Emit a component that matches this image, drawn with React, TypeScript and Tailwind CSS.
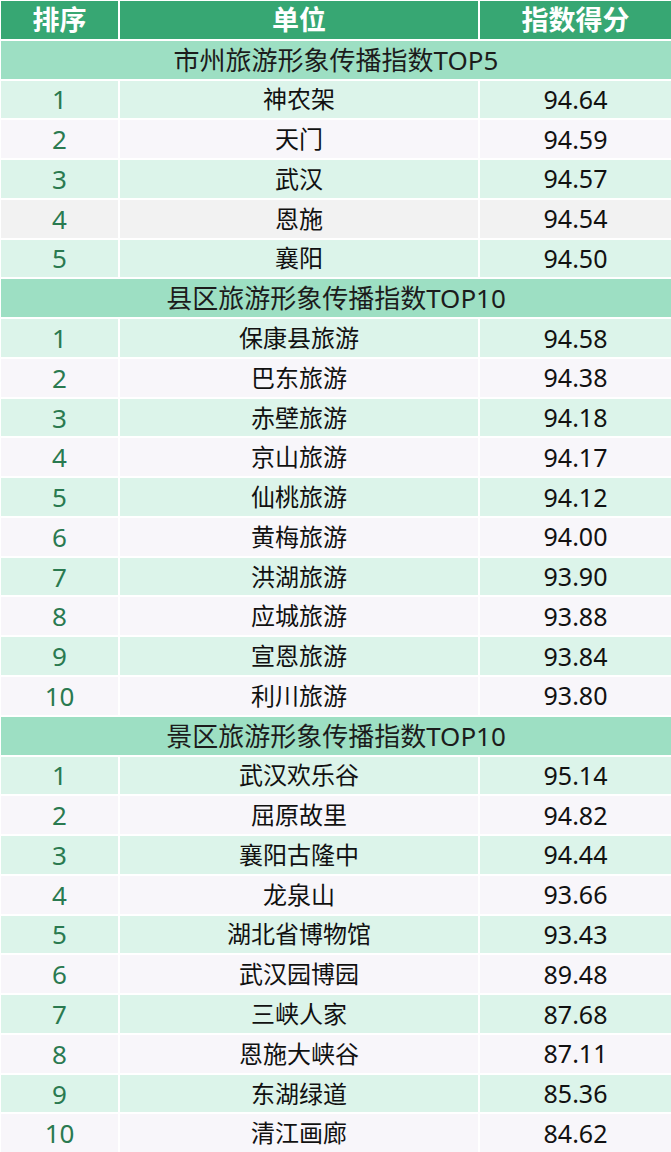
type Row = { rank: number; name: string; score: string; bg?: string };

const sections: { title: string; rows: Row[] }[] = [
  {
    title: "市州旅游形象传播指数TOP5",
    rows: [
      { rank: 1, name: "神农架", score: "94.64" },
      { rank: 2, name: "天门", score: "94.59" },
      { rank: 3, name: "武汉", score: "94.57" },
      { rank: 4, name: "恩施", score: "94.54", bg: "bg-[#f2f2f2]" },
      { rank: 5, name: "襄阳", score: "94.50" },
    ],
  },
  {
    title: "县区旅游形象传播指数TOP10",
    rows: [
      { rank: 1, name: "保康县旅游", score: "94.58" },
      { rank: 2, name: "巴东旅游", score: "94.38" },
      { rank: 3, name: "赤壁旅游", score: "94.18" },
      { rank: 4, name: "京山旅游", score: "94.17" },
      { rank: 5, name: "仙桃旅游", score: "94.12" },
      { rank: 6, name: "黄梅旅游", score: "94.00" },
      { rank: 7, name: "洪湖旅游", score: "93.90" },
      { rank: 8, name: "应城旅游", score: "93.88" },
      { rank: 9, name: "宣恩旅游", score: "93.84" },
      { rank: 10, name: "利川旅游", score: "93.80" },
    ],
  },
  {
    title: "景区旅游形象传播指数TOP10",
    rows: [
      { rank: 1, name: "武汉欢乐谷", score: "95.14" },
      { rank: 2, name: "屈原故里", score: "94.82" },
      { rank: 3, name: "襄阳古隆中", score: "94.44" },
      { rank: 4, name: "龙泉山", score: "93.66" },
      { rank: 5, name: "湖北省博物馆", score: "93.43" },
      { rank: 6, name: "武汉园博园", score: "89.48" },
      { rank: 7, name: "三峡人家", score: "87.68" },
      { rank: 8, name: "恩施大峡谷", score: "87.11" },
      { rank: 9, name: "东湖绿道", score: "85.36" },
      { rank: 10, name: "清江画廊", score: "84.62" },
    ],
  },
];

const font = { fontFamily: '"Noto Sans", "Noto Sans CJK SC", sans-serif' };

function Cell({ className, children }: { className: string; children: React.ReactNode }) {
  return <div className={`flex items-center justify-center leading-none ${className}`}>{children}</div>;
}

export default function App() {
  return (
    <div className="bg-white h-[1152px] w-[671px] pt-[1px] pl-[1px] flex flex-col gap-[2px] leading-none" style={font}>
      <div className="flex-1 min-h-0 grid grid-cols-[117px_358px_1fr] gap-x-[2px]">
        <Cell className="bg-[#37a773] text-white text-[27px] font-bold">排序</Cell>
        <Cell className="bg-[#37a773] text-white text-[27px] font-bold">单位</Cell>
        <Cell className="bg-[#37a773] text-white text-[27px] font-bold">指数得分</Cell>
      </div>
      {sections.map((s) => (
        <div key={s.title} className="contents">
          <div className="flex-1 min-h-0 flex items-center justify-center bg-[#9ddfc3] text-[#1c1c1c] text-[26px]">
            {s.title}
          </div>
          {s.rows.map((r, i) => {
            const bg = r.bg ?? (i % 2 === 0 ? "bg-[#dcf4ea]" : "bg-[#f8f6fa]");
            return (
              <div key={r.rank} className="flex-1 min-h-0 grid grid-cols-[117px_358px_1fr] gap-x-[2px]">
                <Cell className={`${bg} text-[#2a7a50] text-[26px]`}>{r.rank}</Cell>
                <Cell className={`${bg} text-[#111] text-[24px]`}>{r.name}</Cell>
                <Cell className={`${bg} text-[#111] text-[25px]`}>{r.score}</Cell>
              </div>
            );
          })}
        </div>
      ))}
    </div>
  );
}
